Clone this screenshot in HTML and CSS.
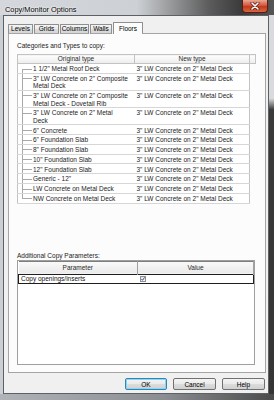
FILE: index.html
```html
<!DOCTYPE html>
<html lang="en">
<head>
  <meta charset="utf-8">
  <title>Copy/Monitor Options</title>
  <link rel="stylesheet" href="styles.css">
</head>
<body>
  <div class="window">
    <div class="titlebar">
      <span class="title">Copy/Monitor Options</span>
      <span class="close">
        <svg width="10" height="8" viewBox="0 0 10 8">
          <path d="M2 1 L8 7 M8 1 L2 7" stroke="#5a1a10" stroke-width="3" stroke-linecap="round"/>
          <path d="M2 1 L8 7 M8 1 L2 7" stroke="#fff" stroke-width="1.6" stroke-linecap="round"/>
        </svg>
      </span>
    </div>
    <div class="middle">
      <div class="frame-left"></div>
      <div class="client">
        <div class="tabs">
          <span class="tab tab-levels">Levels</span>
          <span class="tab tab-grids">Grids</span>
          <span class="tab tab-columns">Columns</span>
          <span class="tab tab-walls">Walls</span>
          <span class="tab active">Floors</span>
          <span class="tab-fill"></span>
        </div>
        <div class="panel">
          <p class="caption">Categories and Types to copy:</p>
          <table class="types">
            <colgroup>
              <col class="col-orig">
              <col class="col-new">
              <col class="col-gutter">
            </colgroup>
            <thead>
              <tr><th>Original type</th><th>New type</th><th></th></tr>
            </thead>
            <tbody>
              <tr><td class="orig first">1 1/2" Metal Roof Deck</td><td class="new">3" LW Concrete on 2" Metal Deck</td><td class="gutter"></td></tr>
              <tr><td class="orig">3" LW Concrete on 2" Composite<br>Metal Deck</td><td class="new">3" LW Concrete on 2" Metal Deck</td><td class="gutter"></td></tr>
              <tr><td class="orig">3" LW Concrete on 2" Composite<br>Metal Deck - Dovetail Rib</td><td class="new">3" LW Concrete on 2" Metal Deck</td><td class="gutter"></td></tr>
              <tr><td class="orig">3" LW Concrete on 2" Metal<br>Deck</td><td class="new">3" LW Concrete on 2" Metal Deck</td><td class="gutter"></td></tr>
              <tr><td class="orig">6" Concrete</td><td class="new">3" LW Concrete on 2" Metal Deck</td><td class="gutter"></td></tr>
              <tr><td class="orig">6" Foundation Slab</td><td class="new">3" LW Concrete on 2" Metal Deck</td><td class="gutter"></td></tr>
              <tr><td class="orig">8" Foundation Slab</td><td class="new">3" LW Concrete on 2" Metal Deck</td><td class="gutter"></td></tr>
              <tr><td class="orig">10" Foundation Slab</td><td class="new">3" LW Concrete on 2" Metal Deck</td><td class="gutter"></td></tr>
              <tr><td class="orig">12" Foundation Slab</td><td class="new">3" LW Concrete on 2" Metal Deck</td><td class="gutter"></td></tr>
              <tr><td class="orig">Generic - 12"</td><td class="new">3" LW Concrete on 2" Metal Deck</td><td class="gutter"></td></tr>
              <tr><td class="orig">LW Concrete on Metal Deck</td><td class="new">3" LW Concrete on 2" Metal Deck</td><td class="gutter"></td></tr>
              <tr><td class="orig last">NW Concrete on Metal Deck</td><td class="new">3" LW Concrete on 2" Metal Deck</td><td class="gutter"></td></tr>
            </tbody>
          </table>
          <p class="caption params-caption">Additional Copy Parameters:</p>
          <div class="params">
            <table>
              <colgroup>
                <col class="col-param">
                <col>
              </colgroup>
              <thead>
                <tr><th>Parameter</th><th>Value</th></tr>
              </thead>
              <tbody>
                <tr class="focused">
                  <td>Copy openings/inserts</td>
                  <td>
                    <span class="check">
                      <svg width="4" height="4" viewBox="0 0 4 4"><path d="M0.4 2 L1.5 3.3 L3.6 0.4" stroke="#2b3f9c" stroke-width="0.9" fill="none"/></svg>
                    </span>
                  </td>
                </tr>
              </tbody>
            </table>
          </div>
        </div>
        <div class="buttons">
          <button class="default">OK</button>
          <button>Cancel</button>
          <button>Help</button>
        </div>
      </div>
      <div class="frame-right"></div>
    </div>
    <div class="frame-bottom"></div>
  </div>
</body>
</html>
```

FILE: styles.css
```css
body {
  margin: 0;
  font-family: "Liberation Sans", Arial, sans-serif;
  font-size: 6.5px;
  color: #1b1b1b;
}
.window {
  width: 274px;
  height: 400px;
  display: flex;
  flex-direction: column;
  background: #c9cdd2;
}
.titlebar {
  height: 15px;
  flex: none;
  display: flex;
  justify-content: space-between;
  background: linear-gradient(to right, #d4d7db 0, #cdd0d4 50%, #5d5d5d 76%, #3b3b3b 88%, #555 100%);
}
.title {
  font-size: 7.4px;
  line-height: 11px;
  padding: 4px 0 0 5px;
  color: #000;
  text-shadow: 0 0 3px #fff, 0 0 2px #fff;
}
.close {
  width: 26px;
  height: 13px;
  margin-right: 6px;
  box-sizing: border-box;
  border: 1px solid #5a1d14;
  border-top: none;
  border-radius: 0 0 4px 4px;
  background: linear-gradient(#eaa896, #d4573c 45%, #c23a1d 55%, #d8673f);
  display: flex;
  align-items: center;
  justify-content: center;
}
.middle {
  flex: 1;
  display: flex;
}
.frame-left {
  width: 3px;
  background: #cbcfd3;
}
.frame-right {
  width: 5px;
  background: linear-gradient(#d8dadd 0, #d8dadd 22%, #3a3a3a 25%, #353535 100%);
}
.frame-bottom {
  height: 6px;
  flex: none;
  background: linear-gradient(to right, #b0b4b8, #8a8d91 60%, #4a4a4a);
}
.client {
  flex: 1;
  display: flex;
  flex-direction: column;
  background: #f0f0f0;
  border: 1px solid #5d6166;
  padding: 6px 0 3px;
}

/* tabs */
.tabs {
  display: flex;
  height: 12px;
  flex: none;
  margin: 0 2px 0 4px;
}
.tab {
  margin: 2px 1px 0 0;
  height: 10px;
  box-sizing: border-box;
  padding: 0;
  text-align: center;
  line-height: 8px;
  color: #000;
  border: 1px solid #8e8f8f;
  border-bottom-color: #a5a5a5;
  border-radius: 1px 1px 0 0;
  background: linear-gradient(#f4f4f4, #ebebeb 50%, #dedede 50%, #d4d4d4);
}
.tab-levels { width: 25px; }
.tab-grids { width: 25px; }
.tab-columns { width: 29px; }
.tab-walls { width: 22px; }
.tab.active {
  width: 30px;
  margin: 0 -1px 0 0;
  height: 12px;
  padding: 1px 0 0;
  line-height: 9px;
  border-bottom: none;
  background: #fcfcfc;
}
.tab-fill {
  flex: 1;
  border-bottom: 1px solid #a5a5a5;
}
.panel {
  flex: 1;
  margin: 0 2px 0 4px;
  border: 1px solid #a5a5a5;
  border-top: none;
  background: #fcfcfc;
  padding: 6.5px 0 0 8px;
}
.caption {
  margin: 0;
  line-height: 9px;
}

/* types grid */
.types {
  border-collapse: collapse;
  table-layout: fixed;
  width: 238px;
  margin-top: 4.5px;
}
.col-orig { width: 117px; }
.col-new { width: 115px; }
.col-gutter { width: 6px; }
.types th {
  height: 8px;
  padding: 0;
  line-height: 8px;
  font-weight: normal;
  color: #2a2a2a;
  border: 1px solid #c3c3c3;
  background: linear-gradient(#fdfdfd, #ececec);
}
.types td {
  padding: 1.2px 2px 0.2px 2px;
  line-height: 7.4px;
  vertical-align: top;
  white-space: nowrap;
  overflow: hidden;
  background: #fff;
  border-bottom: 1px solid #d6d6d6;
}
.types td.orig {
  padding-left: 15px;
  border-left: 1px solid #c3c3c3;
  background:
    linear-gradient(#a9a9a9, #a9a9a9) 4px 0 / 1px 100% no-repeat,
    linear-gradient(#a9a9a9, #a9a9a9) 4px 4.5px / 10px 1px no-repeat,
    #fff;
}
.types td.orig.first {
  background:
    linear-gradient(#a9a9a9, #a9a9a9) 4px 4.5px / 1px 100% no-repeat,
    linear-gradient(#a9a9a9, #a9a9a9) 4px 4.5px / 10px 1px no-repeat,
    #fff;
}
.types td.orig.last {
  background:
    linear-gradient(#a9a9a9, #a9a9a9) 4px 0 / 1px 5px no-repeat,
    linear-gradient(#a9a9a9, #a9a9a9) 4px 4.5px / 10px 1px no-repeat,
    #fff;
}
.types td.new {
  border-right: 1px solid #c3c3c3;
}
.types td.gutter {
  background: transparent;
  border: none;
}
.params-caption {
  margin-top: 48px;
  line-height: 8px;
}

/* parameters grid */
.params {
  width: 238px;
  height: 105px;
  box-sizing: border-box;
  border: 1px solid #9f9f9f;
  background: #fff;
}
.params table {
  width: 100%;
  border-collapse: collapse;
  table-layout: fixed;
}
.col-param { width: 119px; }
.params th {
  height: 12px;
  padding: 0;
  line-height: 11px;
  font-weight: normal;
  color: #2a2a2a;
  border-right: 1px solid #9f9f9f;
  border-top: 1px solid #7e7e7e;
  background: linear-gradient(#fafafa, #e9e9e9);
}
.params td {
  height: 8px;
  padding: 0 2px;
  line-height: 8px;
  border-top: 1px solid #1e1e1e;
  border-bottom: 1px solid #1e1e1e;
  color: #111;
}
.params td:first-child {
  border-left: 1px solid #1e1e1e;
}
.params td:last-child {
  border-right: 1px solid #1e1e1e;
}
.check {
  display: inline-flex;
  align-items: center;
  justify-content: center;
  width: 6px;
  height: 6px;
  box-sizing: border-box;
  border: 1px solid #8f8f8f;
  background: linear-gradient(#e3e3e3, #fafafa);
  vertical-align: middle;
}

/* dialog buttons */
.buttons {
  display: flex;
  justify-content: flex-end;
  gap: 6px;
  margin-top: 5px;
  padding-right: 3px;
  flex: none;
}
button {
  width: 43px;
  height: 12px;
  box-sizing: border-box;
  padding: 0;
  font-family: inherit;
  font-size: 6.5px;
  color: #000;
  border: 1px solid #707070;
  border-radius: 2px;
  background: linear-gradient(#f4f4f4, #ebebeb 45%, #dddddd 50%, #d0d0d0);
}
button.default {
  width: 42px;
  border-color: #3c7fb1;
  box-shadow: inset 0 0 0 1px #7fdcf8;
}
```
